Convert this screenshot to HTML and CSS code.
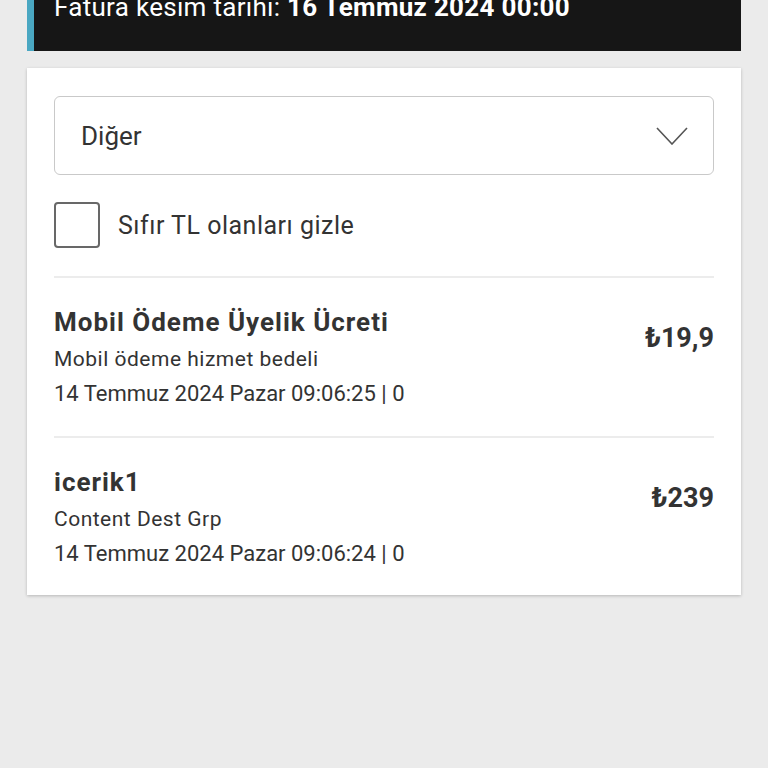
FILE: index.html
```html
<!DOCTYPE html>
<html lang="tr">
<head>
  <meta charset="UTF-8" />
  <meta name="viewport" content="width=device-width, initial-scale=1.0"/>
  <title>Fatura Detayı</title>
  <link rel="stylesheet" href="styles.css">
</head>
<body>
  <div class="bill-bar">
    <p class="bill-date">Fatura kesim tarihi: <b>16 Temmuz 2024 00:00</b></p>
  </div>

  <div class="card">
    <div class="select-box">
      <span class="select-value">Diğer</span>
      <svg class="chevron" width="32" height="18" viewBox="0 0 32 18">
        <polyline points="1,1 16,17 31,1" fill="none" stroke="#555" stroke-width="1.6"/>
      </svg>
    </div>

    <label class="check-row">
      <span class="check-box"></span>
      <span class="check-label">Sıfır TL olanları gizle</span>
    </label>

    <div class="item">
      <div class="item-info">
        <div class="item-title">Mobil Ödeme Üyelik Ücreti</div>
        <div class="item-sub">Mobil ödeme hizmet bedeli</div>
        <div class="item-date">14 Temmuz 2024 Pazar 09:06:25 | 0</div>
      </div>
      <div class="item-price">₺19,9</div>
    </div>

    <div class="item">
      <div class="item-info">
        <div class="item-title">icerik1</div>
        <div class="item-sub">Content Dest Grp</div>
        <div class="item-date">14 Temmuz 2024 Pazar 09:06:24 | 0</div>
      </div>
      <div class="item-price">₺239</div>
    </div>
  </div>
</body>
</html>
```
FILE: styles.css
```css
body {
  margin: 0;
  padding: 0 27px;
  background: #ebebeb;
  font-family: Roboto, 'Noto Sans', sans-serif;
  color: #333;
  height: 768px;
  overflow: hidden;
}
.bill-bar {
  background: #161616;
  border-left: 7px solid #4aa7c2;
  height: 51px;
  overflow: hidden;
}
.bill-date {
  margin: -9px 0 0 20px;
  font-size: 26px;
  line-height: 32px;
  letter-spacing: 0.3px;
  color: #fff;
}
.bill-date b {
  font-weight: 700;
}
.card {
  margin-top: 17px;
  background: #fff;
  box-shadow: 0 1px 3px rgba(0,0,0,0.22);
  padding: 28px 27px 0;
}
.select-box {
  box-sizing: border-box;
  height: 79px;
  border: 1.5px solid #c9c9c9;
  border-radius: 6px;
  display: flex;
  align-items: center;
  justify-content: space-between;
  padding: 0 25px 0 26px;
}
.select-value {
  font-size: 26px;
}
.check-row {
  display: flex;
  align-items: center;
  gap: 18px;
  margin-top: 27px;
  padding-bottom: 28px;
  border-bottom: 2px solid #ececec;
}
.check-box {
  box-sizing: border-box;
  width: 46px;
  height: 46px;
  border: 2px solid #686868;
  border-radius: 4px;
}
.check-label {
  font-size: 25px;
  letter-spacing: 0.5px;
}
.item {
  display: flex;
  justify-content: space-between;
  align-items: flex-start;
  padding: 28px 0 28px;
  border-bottom: 2px solid #ececec;
}
.item:last-child {
  border-bottom: none;
  padding-bottom: 27px;
}
.item-title {
  font-size: 26px;
  font-weight: 700;
  line-height: 32px;
  letter-spacing: 1px;
}
.item-sub {
  font-size: 21px;
  line-height: 42px;
  letter-spacing: 0.5px;
}
.item-date {
  font-size: 22px;
  line-height: 28px;
}
.item-price {
  font-size: 27px;
  font-weight: 700;
  line-height: 32px;
  margin-top: 16px;
}
```
